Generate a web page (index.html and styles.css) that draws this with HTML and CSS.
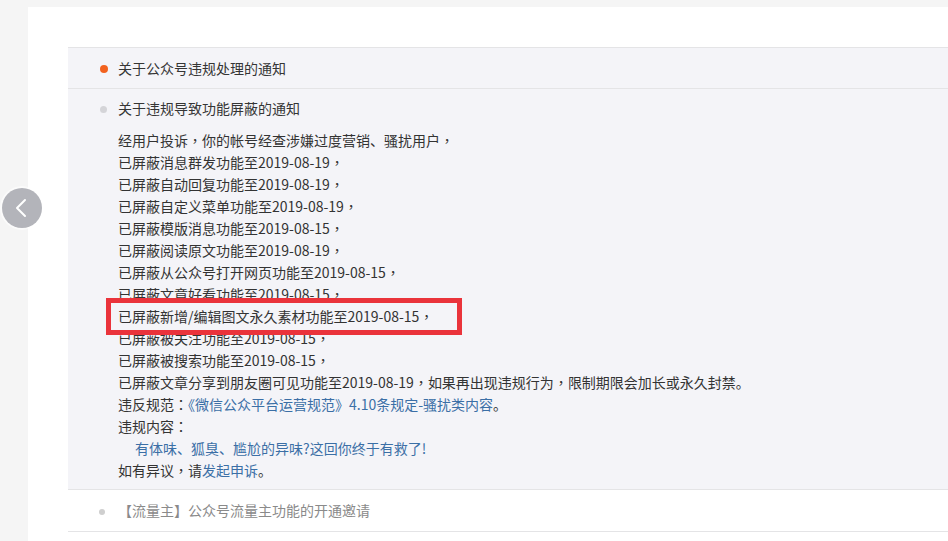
FILE: index.html
```html
<!DOCTYPE html>
<html lang="zh-CN">
<head>
<meta charset="utf-8">
<title>通知</title>
<link rel="stylesheet" href="styles.css">
</head>
<body>
<div class="page">
  <button class="nav-prev" aria-label="上一页">
    <svg width="40" height="40" viewBox="0 0 40 40"><path d="M23 12 L15 20 L23 28" fill="none" stroke="#fff" stroke-width="2" stroke-linecap="round" stroke-linejoin="round"/></svg>
  </button>
  <div class="panel">
    <ul class="notice-list">
      <li class="notice unread">
        <span class="dot dot-new"></span>
        <div class="notice-main"><div class="notice-title">关于公众号违规处理的通知</div></div>
      </li>
      <li class="notice open">
        <span class="dot dot-read"></span>
        <div class="notice-main">
          <div class="notice-title">关于违规导致功能屏蔽的通知</div>
          <div class="notice-body">
            <p>经用户投诉<span class="cp" lang="zh-TW">，</span>你的帐号经查涉嫌过度营销、骚扰用户<span class="cp" lang="zh-TW">，</span></p>
            <p>已屏蔽消息群发功能至2019-08-19<span class="cp" lang="zh-TW">，</span></p>
            <p>已屏蔽自动回复功能至2019-08-19<span class="cp" lang="zh-TW">，</span></p>
            <p>已屏蔽自定义菜单功能至2019-08-19<span class="cp" lang="zh-TW">，</span></p>
            <p>已屏蔽模版消息功能至2019-08-15<span class="cp" lang="zh-TW">，</span></p>
            <p>已屏蔽阅读原文功能至2019-08-19<span class="cp" lang="zh-TW">，</span></p>
            <p>已屏蔽从公众号打开网页功能至2019-08-15<span class="cp" lang="zh-TW">，</span></p>
            <p>已屏蔽文章好看功能至2019-08-15<span class="cp" lang="zh-TW">，</span></p>
            <p class="marked">已屏蔽新增/编辑图文永久素材功能至2019-08-15<span class="cp" lang="zh-TW">，</span></p>
            <p>已屏蔽被关注功能至2019-08-15<span class="cp" lang="zh-TW">，</span></p>
            <p>已屏蔽被搜索功能至2019-08-15<span class="cp" lang="zh-TW">，</span></p>
            <p>已屏蔽文章分享到朋友圈可见功能至2019-08-19<span class="cp" lang="zh-TW">，</span>如果再出现违规行为<span class="cp" lang="zh-TW">，</span>限制期限会加长或永久封禁。</p>
            <p>违反规范<span class="cp" lang="zh-TW">：</span><a class="link">《微信公众平台运营规范》4.10条规定-骚扰类内容</a>。</p>
            <p>违规内容<span class="cp" lang="zh-TW">：</span></p>
            <p class="indent"><a class="link">有体味、狐臭、尴尬的异味?这回你终于有救了!</a></p>
            <p>如有异议<span class="cp" lang="zh-TW">，</span>请<a class="link">发起申诉</a>。</p>
          </div>
        </div>
      </li>
      <li class="notice muted">
        <span class="dot dot-muted"></span>
        <div class="notice-main"><div class="notice-title">【流量主】公众号流量主功能的开通邀请</div></div>
      </li>
    </ul>
  </div>
</div>
</body>
</html>
```
FILE: styles.css
```css
*, *::before, *::after { box-sizing: border-box; }
html, body { margin: 0; padding: 0; }
body {
  background: #f5f5f5;
  font-family: "Noto Sans CJK SC", "Noto Sans", sans-serif;
  font-size: 14px;
  color: #353535;
  overflow: hidden;
}
.page {
  position: relative;
  height: 541px;
  padding: 7px 0 0 28px;
}
.nav-prev {
  position: absolute;
  left: 2px;
  top: 188px;
  width: 40px;
  height: 40px;
  padding: 0;
  border: none;
  border-radius: 50%;
  background: #b3b4ba;
  box-shadow: 0 0 0 2px rgba(255,255,255,0.6);
  display: flex;
  align-items: center;
  justify-content: center;
}
.nav-prev svg { display: block; }
.panel {
  background: #fff;
  height: 100%;
  padding: 40px 0 0 40px;
}
.notice-list {
  list-style: none;
  margin: 0;
  padding: 0;
  border-top: 1px solid #e4e4e6;
}
.notice {
  display: flex;
  align-items: flex-start;
  padding-left: 32px;
  border-bottom: 1px solid #e4e4e6;
  background: #f4f4f8;
}
.notice.unread { padding-top: 9px; padding-bottom: 9px; }
.notice.open { padding-top: 8px; padding-bottom: 8px; }
.notice.muted { background: #fff; padding-top: 9px; padding-bottom: 10px; }
.dot {
  flex: none;
  width: 8px;
  height: 8px;
  border-radius: 50%;
  margin-top: 8px;
  margin-right: 10px;
}
.dot-new { background: #f2621f; }
.dot-read { background: #d4d4d8; width: 7px; height: 7px; margin-right: 11px; margin-top: 9px; }
.dot-muted { background: #cfcfcf; width: 6px; height: 6px; margin-left: -1px; margin-right: 13px; margin-top: 10px; }
.notice-main { flex: 1; }
.notice-title { line-height: 22px; }
.notice.muted .notice-title { color: #8a8a8a; }
.notice-body { margin-top: 10px; }
.notice-body p {
  margin: 0;
  line-height: 22px;
  color: #333;
}
.cp { font-family: "Noto Sans CJK TC", "Noto Sans CJK SC", sans-serif; }
.notice-body .indent { padding-left: 17px; }
.link { color: #3b6fa6; text-decoration: none; }
.marked { position: relative; }
.marked::after {
  content: "";
  position: absolute;
  left: -12px;
  top: -7px;
  width: 356px;
  height: 37px;
  border: 5px solid #ea333b;
  pointer-events: none;
}
```
